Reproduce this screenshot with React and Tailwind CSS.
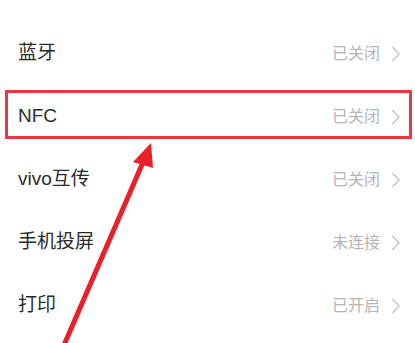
import React from "react";

const rows = [
  { label: "蓝牙", value: "已关闭" },
  { label: "NFC", value: "已关闭", marked: true },
  { label: "vivo互传", value: "已关闭" },
  { label: "手机投屏", value: "未连接" },
  { label: "打印", value: "已开启" },
];

function Chevron() {
  return (
    <svg width="9" height="16" viewBox="0 0 9 16" fill="none">
      <path d="M1.5 1 L8 8 L1.5 15" stroke="#c4c4c4" strokeWidth="1.4" />
    </svg>
  );
}

function Row({ label, value, marked }) {
  return (
    <div className="relative h-[63px] flex items-center justify-between pl-[18px] pr-[15px]">
      <span className="text-[19px] text-[#2b2b2b]">{label}</span>
      <div className="flex items-center gap-[11px]">
        <span className="text-[16px] text-[#b5b5b5]">{value}</span>
        <Chevron />
      </div>
      {marked && (
        <div className="absolute left-[5px] right-[3px] top-[5px] bottom-[9px] border-[3px] border-[#e8393d]" />
      )}
    </div>
  );
}

export default function App() {
  return (
    <div
      className="relative w-full h-[343px] bg-white overflow-hidden pt-[22px]"
      style={{ fontFamily: '"Liberation Sans", "Noto Sans CJK SC", sans-serif' }}
    >
      {rows.map((r) => (
        <Row key={r.label} {...r} />
      ))}

      {/* annotation arrow */}
      <svg
        className="absolute inset-0 pointer-events-none"
        width="415"
        height="343"
        viewBox="0 0 415 343"
      >
        <line x1="61" y1="352" x2="144" y2="160" stroke="#e8202a" strokeWidth="5" />
        <polygon points="151,143 133,162 153,168" fill="#e8202a" />
      </svg>
    </div>
  );
}
